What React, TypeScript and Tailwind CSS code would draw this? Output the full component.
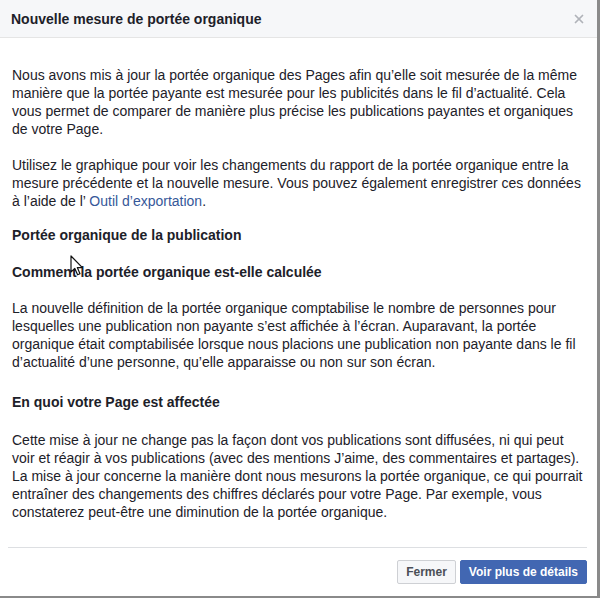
import { X } from 'lucide-react'

const font = { fontFamily: '"Liberation Sans", Arial, sans-serif' }

function Cursor() {
  return (
    <svg
      className="absolute left-[70px] top-[255px]"
      width="14"
      height="22"
      viewBox="0 0 14 22"
    >
      <path
        d="M1 1 L1 17 L4.8 13.4 L7.6 19.8 L10 18.8 L7.3 12.6 L12.4 12.6 Z"
        fill="#fff"
        stroke="#111"
        strokeWidth="1.2"
        strokeLinejoin="round"
      />
    </svg>
  )
}

export default function App() {
  return (
    <div className="w-[600px] h-[598px] bg-white" style={font}>
      <div className="relative w-[600px] h-[598px] flex flex-col bg-white border-r-[3px] border-b-[2px] border-[#8a8a8a] text-[14px] leading-[18px] text-[#1d2129]">
        {/* Header */}
        <div className="h-[38px] shrink-0 flex items-center justify-between pl-[11px] pr-[11px] bg-[#f6f7f9] border-b border-[#e5e5e5]">
          <span className="font-bold text-[14px]">Nouvelle mesure de portée organique</span>
          <X className="w-[14px] h-[14px] text-[#b0b3b9]" strokeWidth={3} />
        </div>

        {/* Body */}
        <div className="flex-1 pl-[12px] pr-[8px] pt-[28px] whitespace-nowrap">
          <p className="mb-[18px]">
            Nous avons mis à jour la portée organique des Pages afin qu’elle soit mesurée de la même
            <br />
            manière que la portée payante est mesurée pour les publicités dans le fil d’actualité. Cela
            <br />
            vous permet de comparer de manière plus précise les publications payantes et organiques
            <br />
            de votre Page.
          </p>
          <p className="mb-[16px]">
            Utilisez le graphique pour voir les changements du rapport de la portée organique entre la
            <br />
            mesure précédente et la nouvelle mesure. Vous pouvez également enregistrer ces données
            <br />
            à l’aide de l’ <span className="text-[#365899]">Outil d’exportation</span>.
          </p>
          <p className="font-bold mb-[19px]">Portée organique de la publication</p>
          <p className="font-bold mb-[18px]">Comment la portée organique est-elle calculée</p>
          <p className="mb-[22px]">
            La nouvelle définition de la portée organique comptabilise le nombre de personnes pour
            <br />
            lesquelles une publication non payante s’est affichée à l’écran. Auparavant, la portée
            <br />
            organique était comptabilisée lorsque nous placions une publication non payante dans le fil
            <br />
            d’actualité d’une personne, qu’elle apparaisse ou non sur son écran.
          </p>
          <p className="font-bold mb-[20px]">En quoi votre Page est affectée</p>
          <p>
            Cette mise à jour ne change pas la façon dont vos publications sont diffusées, ni qui peut
            <br />
            voir et réagir à vos publications (avec des mentions J’aime, des commentaires et partages).
            <br />
            La mise à jour concerne la manière dont nous mesurons la portée organique, ce qui pourrait
            <br />
            entraîner des changements des chiffres déclarés pour votre Page. Par exemple, vous
            <br />
            constaterez peut-être une diminution de la portée organique.
          </p>
        </div>

        {/* Footer */}
        <div className="ml-[8px] mr-[10px] shrink-0 border-t border-[#dddfe2] pt-[12px] pb-[12px] flex justify-end gap-[4px]">
          <button className="h-[24px] px-[8px] rounded-[2px] border border-[#ced0d4] bg-[#f6f7f9] text-[#4b4f56] font-bold text-[12px]">
            Fermer
          </button>
          <button className="h-[24px] px-[8px] rounded-[2px] border border-[#4267b2] bg-[#4267b2] text-white font-bold text-[12px]">
            Voir plus de détails
          </button>
        </div>

        <Cursor />
      </div>
    </div>
  )
}
